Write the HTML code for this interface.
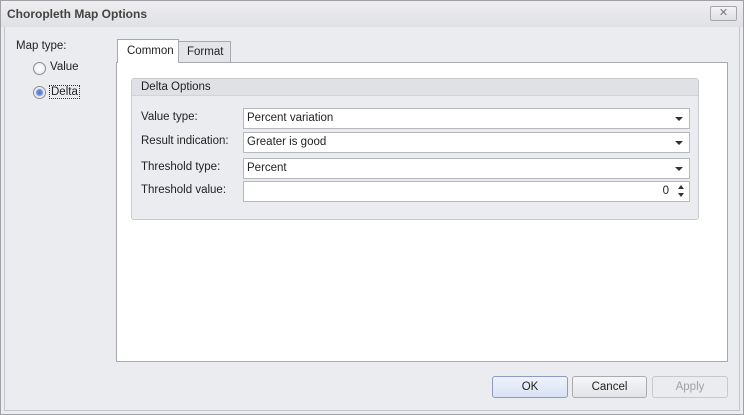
<!DOCTYPE html><html><head><style>
*{box-sizing:border-box;margin:0;padding:0}
body{width:744px;height:415px;background:#ebecef;font-family:"Liberation Sans",sans-serif;font-size:11.5px;color:#222;position:relative;overflow:hidden}
.a{position:absolute}
.frame{left:0;top:0;width:744px;height:415px;border:1px solid #a0a0a6}
.title{left:1px;top:1px;width:742px;height:26px;background:linear-gradient(#eeeef1,#e0e1e5);font-weight:bold;font-size:12px;color:#444;padding:6px 6px}
.inner{left:4px;top:27px;width:736px;height:384px;border:1px solid #c4c5ca;border-top:none}
.close{left:710px;top:6px;width:27px;height:15px;border:1px solid #a6a7ad;border-radius:2px;background:linear-gradient(#f4f4f6,#dedfe3);color:#777;font-size:11px;text-align:center;line-height:13px}
.radio{width:13px;height:13px;border-radius:50%;border:1px solid #8a8c92;background:radial-gradient(#fff,#e6e6e8)}
.sel{background:radial-gradient(circle,#4d6fd0 0,#7a96e0 3px,#dfe4f0 4px,#fff 6px)}
.page{left:116px;top:62px;width:612px;height:300px;background:#fff;border:1px solid #a8a9ae}
.tab{height:23px;border:1px solid #a8a9ae;border-bottom:none;padding:5px 9px;background:#e4e5e9}
.group{left:131px;top:78px;width:568px;height:142px;border:1px solid #c9cace;border-radius:3px;background:#ebecef}
.gh{left:0;top:0;width:566px;height:17px;background:#e0e1e5;padding:2px 9px;border-bottom:1px solid #d2d3d7}
.ed{left:243px;width:447px;height:21px;border:1px solid #b6b8bd;background:#fff;padding:3px 3px}
.arr{position:absolute;right:6px;top:8px;width:0;height:0;border-left:4px solid transparent;border-right:4px solid transparent;border-top:4px solid #333}
.lbl{left:141px}
.btn{top:376px;width:76px;height:22px;border:1px solid #a9abb1;border-radius:3px;background:linear-gradient(#f6f6f8,#e3e4e8);text-align:center;line-height:20px}
</style></head><body>
<div class="a frame"></div>
<div class="a title">Choropleth Map Options</div>
<div class="a close">✕</div>
<div class="a inner"></div>
<div class="a" style="left:16px;top:40px">Map type:</div>
<div class="a radio" style="left:33px;top:62px"></div><div class="a" style="left:50px;top:61px">Value</div>
<div class="a radio sel" style="left:33px;top:86px"></div><div class="a" style="left:49px;top:85px;border:1px dotted #333;padding:0 1px">Delta</div>
<div class="a page"></div>
<div class="a tab" style="left:178px;top:41px;width:53px;height:21px;padding:4px 8px">Format</div>
<div class="a tab" style="left:117px;top:39px;width:62px;height:24px;background:#fff;padding:5px 9px">Common</div>
<div class="a group"><div class="a gh">Delta Options</div></div>
<div class="a lbl" style="top:111px">Value type:</div>
<div class="a lbl" style="top:135px">Result indication:</div>
<div class="a lbl" style="top:161px">Threshold type:</div>
<div class="a lbl" style="top:184px">Threshold value:</div>
<div class="a ed" style="top:108px">Percent variation<div class="arr"></div></div>
<div class="a ed" style="top:132px">Greater is good<div class="arr"></div></div>
<div class="a ed" style="top:158px">Percent<div class="arr"></div></div>
<div class="a ed" style="top:181px;text-align:right;padding-right:20px">0<div style="position:absolute;right:5px;top:3px;width:0;border-left:3.5px solid transparent;border-right:3.5px solid transparent;border-bottom:4px solid #333"></div><div style="position:absolute;right:5px;top:11px;width:0;border-left:3.5px solid transparent;border-right:3.5px solid transparent;border-top:4px solid #333"></div></div>
<div class="a btn" style="left:492px;background:linear-gradient(#eef2fb,#d8e2f6);border-color:#8d9cc0">OK</div>
<div class="a btn" style="left:572px;width:75px">Cancel</div>
<div class="a btn" style="left:652px;color:#a0a0a6;border-color:#c8c9ce;background:#ebecef">Apply</div>
</body></html>
